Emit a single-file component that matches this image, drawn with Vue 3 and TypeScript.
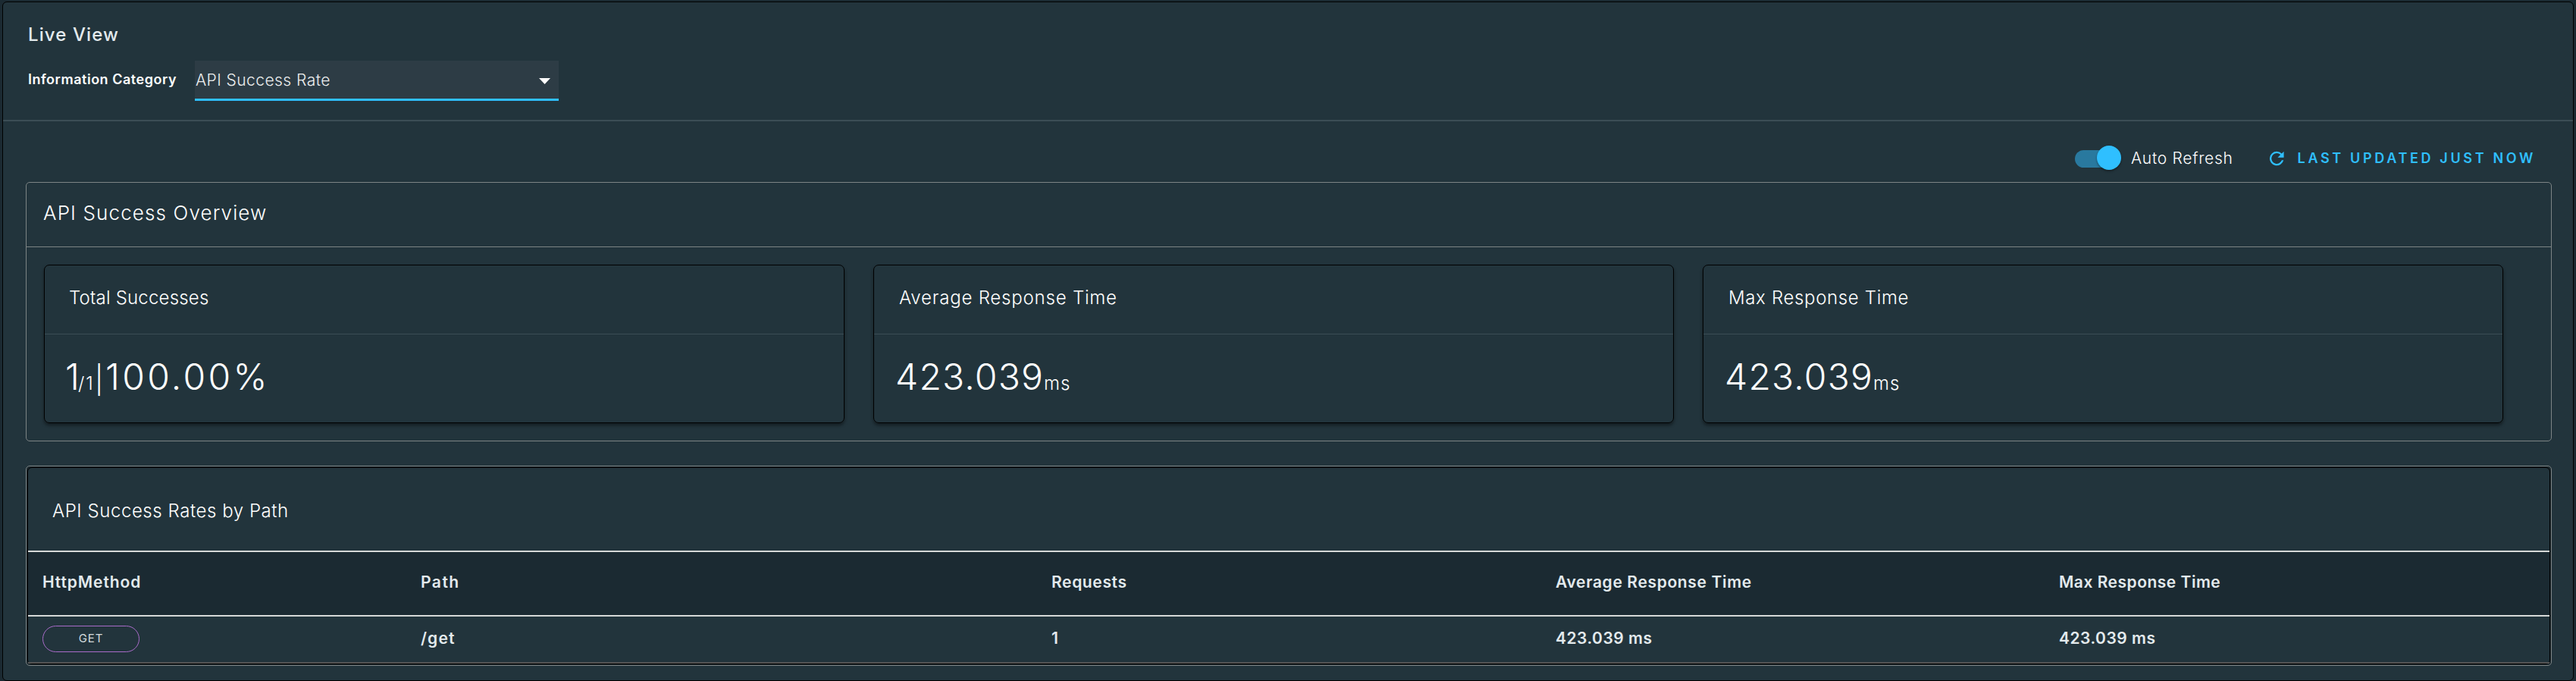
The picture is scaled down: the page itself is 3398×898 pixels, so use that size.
<script setup lang="ts">
import { ref } from 'vue'

interface PathStat {
  method: string
  path: string
  requests: number
  average: string
  max: string
}

const category = ref('API Success Rate')
const autoRefresh = ref(true)
const stats: PathStat[] = [
  { method: 'GET', path: '/get', requests: 1, average: '423.039 ms', max: '423.039 ms' },
]
</script>

<template>
  <main class="live">
    <header class="head">
      <h1 class="title">Live View</h1>
      <div class="field">
        <span class="label">Information Category</span>
        <div class="select" role="combobox">
          <span class="select-value">{{ category }}</span>
          <svg class="caret" viewBox="0 0 15 8"><path d="M0 0h15L7.5 8z" fill="#fff" /></svg>
        </div>
      </div>
    </header>

    <div class="toolbar">
      <button class="switch" role="switch" :aria-checked="autoRefresh" @click="autoRefresh = !autoRefresh">
        <span class="track"><span class="knob"></span></span>
        <span class="switch-label">Auto Refresh</span>
      </button>
      <button class="refresh">
        <svg class="refresh-icon" viewBox="4 4 16 16">
          <path
            d="M17.65 6.35A7.96 7.96 0 0 0 12 4a8 8 0 1 0 7.73 10h-2.08A6 6 0 1 1 12 6c1.66 0 3.14.69 4.22 1.78L13 11h7V4z"
            fill="#2fbfff"
          />
        </svg>
        <span class="refresh-text">LAST UPDATED JUST NOW</span>
      </button>
    </div>

    <section class="panel overview">
      <h2 class="overview-title">API Success Overview</h2>
      <div class="cards">
        <article class="card">
          <h3 class="card-title total">Total Successes</h3>
          <div class="value count">
            <span class="one">1</span><span class="of">/1</span><span class="bar">|</span><span class="percent">100.00%</span>
          </div>
        </article>
        <article class="card">
          <h3 class="card-title average">Average Response Time</h3>
          <div class="value"><span class="number">423.039</span><span class="unit">ms</span></div>
        </article>
        <article class="card">
          <h3 class="card-title">Max Response Time</h3>
          <div class="value"><span class="number">423.039</span><span class="unit">ms</span></div>
        </article>
      </div>
    </section>

    <section class="panel rates">
      <div class="rates-inner">
        <h2 class="rates-title">API Success Rates by Path</h2>
        <div class="row row-head">
          <span class="h-method">HttpMethod</span>
          <span class="h-path">Path</span>
          <span>Requests</span>
          <span>Average Response Time</span>
          <span class="h-max">Max Response Time</span>
        </div>
        <div v-for="s in stats" :key="s.path" class="row row-body">
          <span class="pill">{{ s.method }}</span>
          <span class="c-path">{{ s.path }}</span>
          <span>{{ s.requests }}</span>
          <span class="c-time">{{ s.average }}</span>
          <span class="c-time">{{ s.max }}</span>
        </div>
      </div>
    </section>
  </main>
</template>

<style>
body {
  background: #1b2a32;
}
</style>

<style scoped>
* {
  box-sizing: border-box;
}
.live {
  width: 3392px;
  height: 896px;
  margin: 2px 0 0 3px;
  border: 1px solid #000;
  border-radius: 6px;
  background: #22343c;
  color: #fff;
  font-family: Inter, "Open Sans", sans-serif;
  white-space: nowrap;
  display: flow-root;
}
h1,
h2,
h3 {
  margin: 0;
}
button {
  border: 0;
  padding: 0;
  background: none;
  color: inherit;
  font-family: inherit;
}
.head {
  height: 157px;
  padding: 28px 33px 0;
  border-bottom: 2px solid #3b4d55;
}
.title {
  height: 30px;
  line-height: 30px;
  font-size: 24px;
  font-weight: 500;
  letter-spacing: 1.1px;
  color: #e3eaed;
}
.field {
  display: flex;
  margin-top: 19px;
}
.label {
  width: 220px;
  line-height: 49px;
  font-size: 18px;
  font-weight: 600;
  letter-spacing: 0.52px;
}
.select {
  width: 480px;
  height: 53px;
  padding: 0 11px 0 1px;
  border-bottom: 3px solid #2fbfff;
  background: #2d3c45;
  display: flex;
  align-items: center;
  justify-content: space-between;
}
.select-value {
  font-size: 21px;
  font-weight: 350;
  letter-spacing: 0.45px;
  color: #eceeef;
}
.caret {
  width: 15px;
  height: 8px;
  margin-top: 3px;
}
.toolbar {
  height: 80px;
  padding: 0 49px 0 0;
  display: flex;
  justify-content: flex-end;
}
.switch {
  display: flex;
  align-items: center;
  height: 97px;
  width: 257px;
}
.track {
  width: 58px;
  height: 23px;
  margin-top: 2px;
  border-radius: 12px;
  background: #29799f;
  position: relative;
}
.knob {
  position: absolute;
  right: -3px;
  top: -6px;
  width: 32px;
  height: 32px;
  border-radius: 50%;
  background: #2fbfff;
  box-shadow: 0 2px 3px rgba(0, 0, 0, 0.35);
}
.switch-label {
  margin-left: 16px;
  font-size: 21px;
  font-weight: 350;
  letter-spacing: 0.72px;
}
.refresh {
  display: flex;
  align-items: center;
  height: 97px;
  width: 351px;
}
.refresh-icon {
  width: 20px;
  height: 20px;
  margin-top: 1px;
}
.refresh-text {
  margin-left: 18px;
  font-size: 18px;
  font-weight: 600;
  letter-spacing: 3.66px;
  color: #2fbfff;
}
.panel {
  width: 3332px;
  margin-left: 30px;
  border: 1px solid #7d8485;
  border-radius: 5px;
}
.overview {
  height: 342px;
}
.overview-title {
  height: 85px;
  padding: 0 22px 4px;
  border-bottom: 1px solid #7d8485;
  line-height: 80px;
  font-size: 26px;
  font-weight: 300;
  letter-spacing: 1.13px;
}
.cards {
  display: grid;
  grid-template-columns: repeat(3, 1056px);
  column-gap: 38px;
  padding: 23px;
}
.card {
  height: 209px;
  border: 1px solid #000;
  border-radius: 7px;
  box-shadow: 0 3px 4px rgba(0, 0, 0, 0.45);
}
.card-title {
  height: 91px;
  padding-left: 33px;
  border-bottom: 1px solid #3b4d55;
  line-height: 86px;
  font-size: 24px;
  font-weight: 350;
  letter-spacing: 0.65px;
}
.card-title.average {
  letter-spacing: 0.8px;
}
.card-title.total {
  padding-left: 32px;
  letter-spacing: 0.2px;
}
.value {
  display: flex;
  align-items: baseline;
  height: 116px;
  padding-left: 28px;
  line-height: 111px;
  font-size: 48px;
  font-weight: 300;
}
.number {
  letter-spacing: 1.2px;
}
.unit {
  font-size: 24px;
  letter-spacing: 1px;
}
.value.count {
  padding-left: 27px;
}
.one {
  width: 17px;
}
.of {
  width: 22px;
  font-size: 24px;
  letter-spacing: 2px;
}
.bar {
  width: 14px;
  font-size: 36px;
}
.percent {
  letter-spacing: 3.3px;
}
.rates {
  height: 264px;
  margin-top: 32px;
  padding: 1px;
  background: #1a272d;
  border-color: #7d8485;
}
.rates-inner {
  height: 260px;
  border: 1px solid #000;
  border-radius: 6px;
  background: #22343c;
}
.rates-title {
  height: 109px;
  padding: 4px 0 0 32px;
  line-height: 105px;
  font-size: 24px;
  font-weight: 350;
  letter-spacing: 0.56px;
}
.row {
  display: grid;
  grid-template-columns: 499px 832px 665px 664px 1fr;
  align-items: center;
  padding-left: 19px;
  font-size: 21px;
  font-weight: 600;
  letter-spacing: 0.64px;
  color: #e3eaed;
}
.row-head {
  height: 87px;
  padding-bottom: 4px;
  border: solid #d6d9d8;
  border-width: 2px 0;
  background: #1b2a32;
}
.row-body {
  height: 62px;
  padding-bottom: 3px;
  border-bottom: 2px solid #545454;
}
.h-method {
  letter-spacing: 0.9px;
}
.h-path {
  letter-spacing: 1.5px;
}
.h-max {
  letter-spacing: 0.5px;
}
.c-path {
  letter-spacing: 1.16px;
}
.c-time {
  letter-spacing: 0.5px;
}
.pill {
  width: 128px;
  height: 35px;
  margin-top: 2px;
  border: 1px solid #a86bc8;
  border-radius: 18px;
  line-height: 32px;
  text-align: center;
  font-size: 15px;
  font-weight: 400;
  letter-spacing: 0.9px;
  color: #d5dcdf;
}
</style>
